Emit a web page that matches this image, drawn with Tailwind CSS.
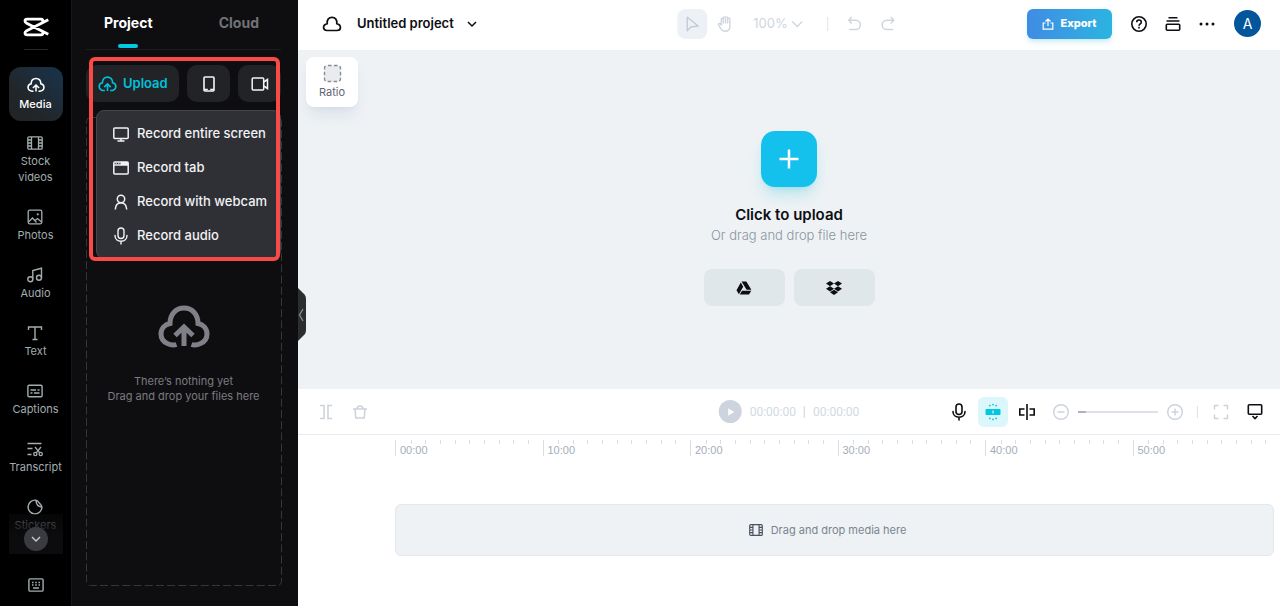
<!DOCTYPE html>
<html lang="en">
<head>
    <meta charset="UTF-8">
    <meta name="viewport" content="width=device-width, initial-scale=1.0">
    <title>Untitled project</title>
    <script src="https://cdn.jsdelivr.net/npm/@tailwindcss/browser@4"></script>
</head>
<body class="bg-white font-['Inter',sans-serif] text-[#0d0e12]">

    <!-- Shared icons -->
    <svg class="hidden">
        <symbol id="cloud-up" viewBox="0 0 52 44" fill="none" stroke="currentColor">
            <path d="M18.500 39.500C14 41 3 38.500 3 29C3 23 7 19.500 12 18.500C12 9 18 3 26 3C34 3 40 9 40 18.500C45 19.500 49 23 49 29C49 38.500 38 41 33.500 39.500"/>
            <path d="M26 41V23M17 30.500L26 22L35 30.500"/>
        </symbol>
        <symbol id="film" viewBox="0 0 16 14" fill="none" stroke="currentColor" stroke-width="1.300">
            <rect x=".8" y=".8" width="14.400" height="12.400" rx="1.200"/>
            <path d="M4.500 1v12M11.500 1v12M1 4h3.500M1 7h3.500M1 10h3.500M11.500 4H15M11.500 7H15M11.500 10H15"/>
        </symbol>
        <symbol id="mic" viewBox="0 0 16 18" fill="none" stroke="currentColor" stroke-linecap="round">
            <rect x="5" y="1" width="6" height="10.500" rx="3"/>
            <path d="M2 8.500c0 3.500 2.600 5.700 6 5.700s6-2.200 6-5.700M8 14.500V17"/>
        </symbol>
    </svg>

    <div class="flex min-h-screen">

        <!-- Icon rail -->
        <nav class="relative flex w-[71px] shrink-0 flex-col items-center bg-black text-center text-[11px] leading-4 text-[#a3adb0]">
            <a href="#" aria-label="Home" class="mt-[17px] text-white">
                <svg class="h-5 w-[26px]" viewBox="0 0 26 20" fill="none" stroke="currentColor" stroke-width="2.800" stroke-linejoin="round">
                    <path d="M19.800 6V4Q19.800 2.200 18 2.200H4Q2 2.200 2 4Q2 5.200 3.200 5.900L25.300 17.300M19.800 14V16Q19.800 17.800 18 17.800H4Q2 17.800 2 16Q2 14.800 3.200 14.100L25.300 2.700"/>
                </svg>
            </a>
            <div class="mt-3 h-px w-6 bg-[#25282a]"></div>
            <a href="#" class="mt-[17px] flex h-[54px] w-[54px] flex-col items-center gap-[3px] rounded-xl bg-linear-to-bl from-[#16344e] to-[#222527] to-70% pt-[10px] font-medium text-white">
                <svg class="h-4 w-[18px]" stroke-width="4.500"><use href="#cloud-up"/></svg>
                Media
            </a>
            <div class="mt-[14px] flex flex-col gap-6">
                <a href="#" class="flex flex-col items-center gap-[2px]">
                    <svg class="h-4 w-4"><use href="#film"/></svg>
                    <span>Stock<br>videos</span>
                </a>
                <a href="#" class="flex flex-col items-center gap-[2px]">
                    <svg class="h-4 w-4" viewBox="0 0 16 16" fill="none" stroke="currentColor" stroke-width="1.300">
                        <rect x="1.200" y="1.200" width="13.600" height="13.600" rx="1.500"/>
                        <path d="M1.500 13L5.500 9L9.500 13.500M8 11.500L10.500 9.500L14.500 13"/>
                        <circle cx="10.800" cy="5.300" r="1.100" fill="currentColor" stroke="none"/>
                    </svg>
                    Photos
                </a>
                <a href="#" class="flex flex-col items-center gap-[2px]">
                    <svg class="h-4 w-4" viewBox="0 0 16 16" fill="none" stroke="currentColor" stroke-width="1.400">
                        <circle cx="3.300" cy="12.300" r="2.500"/>
                        <circle cx="12" cy="10.800" r="2.500"/>
                        <path d="M5.800 12.300V3.500L14.500 1.200V10.800"/>
                    </svg>
                    Audio
                </a>
                <a href="#" class="flex flex-col items-center gap-[2px]">
                    <svg class="h-4 w-4" viewBox="0 0 16 16" fill="none" stroke="currentColor" stroke-width="1.400">
                        <path d="M1.500 5V2H14.500V5M8 2V14.500M5.500 14.500H10.500"/>
                    </svg>
                    Text
                </a>
                <a href="#" class="flex flex-col items-center gap-[2px]">
                    <svg class="h-4 w-4" viewBox="0 0 16 16" fill="none" stroke="currentColor" stroke-width="1.400">
                        <rect x=".9" y="2.200" width="14.200" height="11.600" rx="1.200"/>
                        <path d="M3.500 7H9M10.500 7H12.500M3.500 10H5.500M7 10H12.500"/>
                    </svg>
                    Captions
                </a>
                <a href="#" class="flex flex-col items-center gap-[2px]">
                    <svg class="h-4 w-4" viewBox="0 0 16 16" fill="none" stroke="currentColor" stroke-width="1.300">
                        <path d="M.5 2.500H14.500M.5 7.500H5.500M.5 13.500H4.500M8 6L12.800 11.800M14 6L9.200 11.800"/>
                        <circle cx="8.300" cy="13" r="1.600"/>
                        <circle cx="13.700" cy="13" r="1.600"/>
                    </svg>
                    Transcript
                </a>
                <a href="#" class="flex flex-col items-center gap-[2px]">
                    <svg class="h-4 w-4" viewBox="0 0 16 16" fill="none" stroke="currentColor" stroke-width="1.400">
                        <path d="M9 1.200A6.900 6.900 0 1 0 14.900 8C14.900 7 14.500 6.500 14 6L10.500 2C10 1.500 9.700 1.200 9 1.200C9 5.500 10.500 7.500 14.900 8"/>
                    </svg>
                    Stickers
                </a>
            </div>
            <a href="#" aria-label="Keyboard shortcuts" class="mt-11">
                <svg class="h-4 w-4" viewBox="0 0 16 16" fill="none" stroke="currentColor" stroke-width="1.400">
                    <rect x=".9" y="1.900" width="14.200" height="12.200" rx="1.200"/>
                    <path d="M4 5.500H5.500M7.200 5.500H8.800M10.500 5.500H12M4 8H5.500M7.200 8H8.800M10.500 8H12M5 11H11"/>
                </svg>
            </a>
            <!-- Fade over the end of the scrolled list -->
            <div class="absolute top-[514px] left-[9px] flex h-10 w-[54px] items-end justify-center bg-linear-to-b from-[#0c0c0e]/50 to-[#0c0c0e] to-60% pb-[3px]">
                <button aria-label="More tools" class="grid h-6 w-6 place-items-center rounded-full bg-[#3a3b40] text-[#c3c5ca]">
                    <svg class="h-2 w-3" viewBox="0 0 12 8" fill="none" stroke="currentColor" stroke-width="1.500"><path d="M2 2L6 6L10 2"/></svg>
                </button>
            </div>
        </nav>

        <!-- Media panel -->
        <aside class="relative flex w-[227px] shrink-0 flex-col border-l border-[#17181a] bg-[#0e0e10] pr-[17px] pl-[14px]">
            <div class="flex h-[50px] items-start justify-between border-b border-[#1c1d1f] pt-3 pr-[22px] pl-[18px] text-sm leading-[22px] font-bold">
                <button class="text-white">
                    Project
                    <span class="mx-auto mt-[10px] block h-1 w-5 rounded-sm bg-[#00cae0]"></span>
                </button>
                <button class="text-[#717277]">Cloud</button>
            </div>
            <div class="mt-[15px] flex h-[37px] gap-2 text-[#f4f5f6]">
                <button class="flex grow items-center gap-[6px] rounded-[10px] bg-[#222326] pl-3 text-[13px] font-semibold text-[#00c1db]">
                    <svg class="h-4 w-[19px]" stroke-width="4.500"><use href="#cloud-up"/></svg>
                    Upload
                </button>
                <button aria-label="Upload from phone" class="grid w-[43px] place-items-center rounded-[10px] bg-[#222326]">
                    <svg class="h-4 w-3" viewBox="0 0 12 16" fill="none" stroke="currentColor" stroke-width="1.600">
                        <rect x="1" y="1" width="10" height="14" rx="1"/><path d="M1 13.500H4.800M7.200 13.500H11"/>
                    </svg>
                </button>
                <button aria-label="Record" class="grid w-[43px] place-items-center rounded-[10px] bg-[#222326]">
                    <svg class="h-[14px] w-[18px]" viewBox="0 0 18 14" fill="none" stroke="currentColor" stroke-width="1.500">
                        <rect x="1.200" y="1" width="11.500" height="12" rx="1"/><path d="M12.700 5L16.500 2.500V11.500L12.700 9"/>
                    </svg>
                </button>
            </div>

            <!-- Drop area -->
            <div class="relative mt-[15px] mb-[21px] flex grow flex-col items-center pt-[188px] text-center text-[11px] leading-[15px] text-[#7b7c81]">
                <svg class="absolute inset-0 h-full w-full overflow-visible">
                    <rect x="0.500" y="0.500" width="100%" height="100%" rx="4" fill="none" stroke="#35363a" stroke-dasharray="8 3.200"/>
                </svg>
                <svg class="h-11 w-[52px] text-[#808188]" stroke-width="5"><use href="#cloud-up"/></svg>
                <p class="mt-[25px]">There’s nothing yet<br>Drag and drop your files here</p>
            </div>

            <!-- Record menu -->
            <div class="absolute top-[110px] right-[17px] left-6 flex h-[149px] flex-col rounded-lg border border-[#45464b] bg-[#2f3035] pt-[6px] pl-4 text-[13px] font-medium text-[#f1f2f4]">
                <button class="flex h-[34px] items-center gap-2 whitespace-nowrap">
                    <svg class="h-[18px] w-4" viewBox="0 0 16 18" fill="none" stroke="currentColor" stroke-width="1.500">
                        <rect x=".8" y="3" width="14.400" height="10.500" rx="1"/><path d="M8 13.500V16M4.500 16H11.500"/>
                    </svg>
                    Record entire screen
                </button>
                <button class="flex h-[34px] items-center gap-2 whitespace-nowrap">
                    <svg class="h-[18px] w-4" viewBox="0 0 16 18" fill="none" stroke="currentColor" stroke-width="1.500">
                        <rect x=".8" y="3" width="14.400" height="12" rx="1"/><path d="M7.500 4.500H15" stroke-width="3"/><path d="M1 6H15"/><path d="M2.500 4.200H4M5 4.200H6.500" stroke-width="1"/>
                    </svg>
                    Record tab
                </button>
                <button class="flex h-[34px] items-center gap-2 whitespace-nowrap">
                    <svg class="h-[18px] w-4" viewBox="0 0 16 18" fill="none" stroke="currentColor" stroke-width="1.500">
                        <circle cx="8" cy="6" r="3.700"/><path d="M2.300 16.500C2.500 12.500 4.500 9.700 8 9.700S13.500 12.500 13.700 16.500"/>
                    </svg>
                    Record with webcam
                </button>
                <button class="flex h-[34px] items-center gap-2 whitespace-nowrap">
                    <svg class="h-[18px] w-4" stroke-width="1.400"><use href="#mic"/></svg>
                    Record audio
                </button>
            </div>
            <!-- Highlight frame -->
            <div class="pointer-events-none absolute top-[57px] right-[18px] left-[17px] h-[204px] rounded-[6px] border-4 border-[#f84a46]"></div>

            <!-- Collapse handle -->
            <button aria-label="Collapse panel" class="absolute top-[288px] -right-2 z-10 text-[#7f8b90]">
                <svg class="h-[53px] w-2" viewBox="0 0 8 53" fill="none">
                    <path d="M0 0L6.500 6.500Q8 8 8 11V42Q8 45 6.500 46.500L0 53Z" fill="#2b2d2f"/>
                    <path d="M5 21L1.500 27L5 33" stroke="currentColor" stroke-width="1.400"/>
                </svg>
            </button>
        </aside>

        <main class="flex min-w-0 grow flex-col">

            <!-- Top bar -->
            <header class="relative flex h-[50px] shrink-0 items-center pb-[3px] pl-6">
                <svg class="h-[18px] w-5" viewBox="0 0 20 18" fill="none" stroke="currentColor" stroke-width="1.700">
                    <path d="M5 15.500C.5 15.500 .3 9.800 5.200 8.600C4.800 4.500 7 2.300 10 2.300S15.200 4.500 14.800 8.600C19.700 9.800 19.500 15.500 15 15.500Z"/>
                </svg>
                <button class="ml-[15px] flex items-center gap-3 text-[13px] font-semibold">
                    Untitled project
                    <svg class="h-2 w-3" viewBox="0 0 12 8" fill="none" stroke="currentColor" stroke-width="1.500"><path d="M2 2L6 6L10 2"/></svg>
                </button>

                <div class="absolute left-1/2 flex -translate-x-1/2 items-center pr-1 text-[#cfd6df]">
                    <button aria-label="Select" class="grid h-[30px] w-[30px] place-items-center rounded-lg bg-[#edf1f5] text-[#c3ccd7]">
                        <svg class="h-4 w-4" viewBox="0 0 16 16" fill="none" stroke="currentColor" stroke-width="1.400" stroke-linejoin="round"><path d="M3 1.200V14.800L6.500 11L14 10Z"/></svg>
                    </button>
                    <button aria-label="Hand" class="ml-[10px]">
                        <svg class="h-[18px] w-4" viewBox="0 0 16 18" fill="none" stroke="currentColor" stroke-width="1.400" stroke-linecap="round" stroke-linejoin="round">
                            <path d="M4 10V4.200c0-1.300 2-1.300 2 0V2.800c0-1.300 2.200-1.300 2.200 0c0-1.300 2.200-1.300 2.200 0V4c0-1.300 2.200-1.300 2.200 0V11c0 3.500-2 5.300-4.800 5.300c-3 0-4-1.800-6.500-6.500c-.5-1.200 1-2 1.900-.8L4 10M6 4V8M8.200 3V8M10.400 4V8"/>
                        </svg>
                    </button>
                    <button class="ml-5 flex items-center gap-1 text-[13px]">
                        100%
                        <svg class="h-2 w-3" viewBox="0 0 12 8" fill="none" stroke="currentColor" stroke-width="1.300"><path d="M1 1.500L6 6.500L11 1.500"/></svg>
                    </button>
                    <div class="ml-6 h-[14px] w-px bg-[#dfe3e9]"></div>
                    <button aria-label="Undo" class="ml-[18px]">
                        <svg class="h-4 w-4" viewBox="0 0 16 16" fill="none" stroke="currentColor" stroke-width="1.500"><path d="M5.500 1L2.500 4.300L5.500 7.600M2.500 4.300H9.500a4.600 4.600 0 0 1 0 9.200H3"/></svg>
                    </button>
                    <button aria-label="Redo" class="ml-[18px]">
                        <svg class="h-4 w-4" viewBox="0 0 16 16" fill="none" stroke="currentColor" stroke-width="1.500"><path d="M10.500 1L13.500 4.300L10.500 7.600M13.500 4.300H6.500a4.600 4.600 0 0 0 0 9.200H13"/></svg>
                    </button>
                </div>

                <div class="ml-auto flex items-center pr-[19px]">
                    <button class="flex h-[30px] w-[85px] items-center justify-center gap-[6px] rounded-md bg-linear-to-r from-[#3f8ce3] to-[#2ab4e0] text-[11px] font-extrabold text-white shadow-md shadow-[#2ab4e0]/20">
                        <svg class="h-3 w-3" viewBox="0 0 12 12" fill="none" stroke="currentColor" stroke-width="1.200"><path d="M3.500 5H1.200V11.200H10.800V5H8.500M6 8V1.200M3.500 3.500L6 1L8.500 3.500"/></svg>
                        Export
                    </button>
                    <button aria-label="Help" class="ml-[18px]">
                        <svg class="h-[18px] w-[18px]" viewBox="0 0 18 18" fill="none" stroke="currentColor" stroke-width="1.600">
                            <circle cx="9" cy="9" r="7.200"/><path d="M6.700 7.300C6.700 4.200 11.300 4.300 11.300 7.200C11.300 8.900 9 8.900 9 10.800M9 11.800V13.400"/>
                        </svg>
                    </button>
                    <button aria-label="Queue" class="ml-4">
                        <svg class="h-[18px] w-[18px]" viewBox="0 0 18 18" fill="none" stroke="currentColor" stroke-width="1.600"><path d="M4.500 2.800H13.500M2.500 6H15.500"/><rect x="2.300" y="9.300" width="13.400" height="5.900" rx="1"/></svg>
                    </button>
                    <button aria-label="More" class="ml-4">
                        <svg class="h-[18px] w-[18px]" viewBox="0 0 18 18" fill="currentColor"><circle cx="3" cy="9" r="1.500"/><circle cx="9" cy="9" r="1.500"/><circle cx="15" cy="9" r="1.500"/></svg>
                    </button>
                    <button class="ml-[18px] h-[27px] w-[27px] rounded-full bg-[#03569b] text-sm text-white">A</button>
                </div>
            </header>

            <!-- Preview -->
            <section class="relative flex min-h-[339px] grow flex-col items-center bg-[#eef2f5] pt-[81px]">
                <button class="absolute top-[7px] left-2 flex h-[50px] w-[52px] flex-col items-center rounded-lg bg-white pt-[7px] text-[11px] leading-[18px] text-[#5f6673] shadow-lg shadow-slate-400/20">
                    <svg class="h-[19px] w-[19px] shrink-0" viewBox="0 0 19 19">
                        <rect x="1.500" y="1.500" width="16" height="16" rx="2.500" fill="#e9ebee" stroke="#868c97" stroke-width="1.400" stroke-dasharray="3.600 2.300" stroke-dashoffset="-1"/>
                    </svg>
                    Ratio
                </button>
                <button aria-label="Upload file" class="grid h-14 w-14 place-items-center rounded-[14px] bg-[#14c0ec] text-white shadow-lg shadow-[#14c0d8]/25">
                    <svg class="h-5 w-5" viewBox="0 0 20 20" stroke="currentColor" stroke-width="2.500"><path d="M10 .5V19.500M.5 10H19.500"/></svg>
                </button>
                <p class="mt-[18px] text-[15px] leading-5 font-semibold">Click to upload</p>
                <p class="text-[13px] leading-5 font-light text-[#8a949b]">Or drag and drop file here</p>
                <div class="mt-6 flex gap-[9px]">
                    <button aria-label="Google Drive" class="grid h-[37px] w-[81px] place-items-center rounded-lg bg-[#e0e7ea]">
                        <svg class="h-[14px] w-4" viewBox="0 0 16 14" fill="currentColor"><path d="M5.500 .4H10.300L15.400 8.800H10.600ZM4.800 1.500L7.200 5.700L2.900 13.300L.5 9.200ZM6 9.700H15.300L13 13.600H3.800Z"/></svg>
                    </button>
                    <button aria-label="Dropbox" class="grid h-[37px] w-[81px] place-items-center rounded-lg bg-[#e0e7ea]">
                        <svg class="h-[14px] w-4" viewBox="0 0 16 14" fill="currentColor"><path d="M4 0L8 2.600L4 5.200L0 2.600ZM12 0L16 2.600L12 5.200L8 2.600ZM4 5.200L8 7.800L4 10.400L0 7.800ZM12 5.200L16 7.800L12 10.400L8 7.800ZM8 8.800L12 11.300L8 13.900L4 11.300Z"/></svg>
                    </button>
                </div>
            </section>

            <!-- Timeline -->
            <section class="shrink-0">
                <div class="relative flex h-[46px] items-center border-b border-[#e6e9ee] pl-[19px] text-[#cbd2dc]">
                    <button aria-label="Split">
                        <svg class="h-4 w-[18px]" viewBox="0 0 18 16" fill="none" stroke="currentColor" stroke-width="1.500"><path d="M3 1.500H7V14.500H3M15 1.500H11V14.500H15"/></svg>
                    </button>
                    <button aria-label="Delete" class="ml-4">
                        <svg class="h-4 w-[18px]" viewBox="0 0 18 16" fill="none" stroke="currentColor" stroke-width="1.500"><path d="M2 5H16M4 5L4.800 14H13.200L14 5M6 5C6 1 12 1 12 5"/></svg>
                    </button>

                    <div class="absolute left-1/2 flex -translate-x-1/2 items-center gap-2 font-['Roboto',sans-serif] text-[12px] text-[#d3d9e1]">
                        <button aria-label="Play" class="grid h-[23px] w-[23px] place-items-center rounded-full bg-[#cdd4de] text-white">
                            <svg class="h-2 w-2" viewBox="0 0 8 8" fill="currentColor"><path d="M1.500 .3L7.500 4L1.500 7.700Z"/></svg>
                        </button>
                        <span>00:00:00</span>
                        <span class="h-3 w-px bg-[#ccd3dc]"></span>
                        <span>00:00:00</span>
                    </div>

                    <div class="ml-auto flex items-center pr-4">
                        <button aria-label="Record voiceover" class="text-[#0d0e12]">
                            <svg class="h-[18px] w-4" stroke-width="1.600"><use href="#mic"/></svg>
                        </button>
                        <button aria-label="Snapping" class="ml-[11px] grid h-[30px] w-[30px] place-items-center rounded-md bg-[#dcf7fb] text-[#00c8e4]">
                            <svg class="h-[18px] w-4" viewBox="0 0 16 18" fill="currentColor">
                                <rect x=".5" y="6" width="15" height="6" rx=".8"/>
                                <circle cx="8" cy="1.600" r=".9"/><circle cx="4.800" cy="2.600" r=".9"/><circle cx="11.200" cy="2.600" r=".9"/>
                                <circle cx="8" cy="16.400" r=".9"/><circle cx="4.800" cy="15.400" r=".9"/><circle cx="11.200" cy="15.400" r=".9"/>
                                <path d="M8 7.500V10.500" stroke="#dcf7fb" stroke-width="1.200"/>
                            </svg>
                        </button>
                        <button aria-label="Preview axis" class="ml-[10px] text-[#0d0e12]">
                            <svg class="h-[18px] w-[18px]" viewBox="0 0 18 18" fill="none" stroke="currentColor" stroke-width="1.600"><path d="M9 1V17M6.500 6H1.800V12H6.500M11.500 6H16.200V12H11.500"/></svg>
                        </button>
                        <button aria-label="Zoom out" class="ml-4">
                            <svg class="h-[18px] w-[18px]" viewBox="0 0 18 18" fill="none" stroke="currentColor" stroke-width="1.400"><circle cx="9" cy="9" r="7.300"/><path d="M5.500 9H12.500"/></svg>
                        </button>
                        <input type="range" min="0" max="100" value="0" aria-label="Timeline zoom" class="ml-2 h-[2px] w-20 appearance-none bg-[#dde2e9] bg-linear-to-r from-[#aab3c0] from-10% to-[#dde2e9] to-10% [&::-webkit-slider-thumb]:h-0 [&::-webkit-slider-thumb]:w-0 [&::-webkit-slider-thumb]:appearance-none">
                        <button aria-label="Zoom in" class="ml-2">
                            <svg class="h-[18px] w-[18px]" viewBox="0 0 18 18" fill="none" stroke="currentColor" stroke-width="1.400"><circle cx="9" cy="9" r="7.300"/><path d="M5.500 9H12.500M9 5.500V12.500"/></svg>
                        </button>
                        <div class="ml-[13px] h-3 w-px bg-[#dfe3e9]"></div>
                        <button aria-label="Fit timeline" class="ml-[15px]">
                            <svg class="h-4 w-4" viewBox="0 0 16 16" fill="none" stroke="currentColor" stroke-width="1.500"><path d="M1.500 5.500V1.500H5.500M10.500 1.500H14.500V5.500M14.500 10.500V14.500H10.500M5.500 14.500H1.500V10.500"/></svg>
                        </button>
                        <button aria-label="Collapse timeline" class="ml-[17px] text-[#0d0e12]">
                            <svg class="h-[18px] w-[18px]" viewBox="0 0 18 18" fill="none" stroke="currentColor" stroke-width="1.600"><rect x="2.300" y="1.800" width="13.400" height="9.500" rx="1"/><path d="M6.500 13L9 15.500L11.500 13"/></svg>
                        </button>
                    </div>
                </div>

                <div id="ruler" class="mt-[5px] ml-[97px] grid h-4 grid-cols-6 font-['Liberation_Sans',sans-serif] text-[11px] text-[#a4adba]"></div>

                <div class="mt-12 mr-[6px] mb-[50px] ml-[97px] flex h-[52px] items-center justify-center gap-2 rounded-md border border-[#e3e8ed] bg-[#eef2f5] pr-[14px] text-[11px] text-[#7b8491]">
                    <svg class="h-[14px] w-[14px] text-[#4a5262]"><use href="#film"/></svg>
                    Drag and drop media here
                </div>
            </section>
        </main>
    </div>

    <script>
        // Ruler: one column per 10 seconds, nine minor ticks in each
        const ruler = document.getElementById('ruler');
        for (let i = 0; i < 6; i++) {
            const col = document.createElement('div');
            col.className = 'relative h-4 border-l border-[#d9dee5] pl-1 pt-[3px]';
            let ticks = '';
            for (let j = 0; j < 10; j++) {
                ticks += j === 0 ? '<i></i>' : '<i class="h-1 border-l border-[#d9dee5]"></i>';
            }
            col.innerHTML = '<div class="absolute inset-x-0 top-0 grid grid-cols-10">' + ticks + '</div>'
                + '<span class="block leading-[14px]">' + i + '0:00</span>';
            ruler.appendChild(col);
        }
    </script>
</body>
</html>
